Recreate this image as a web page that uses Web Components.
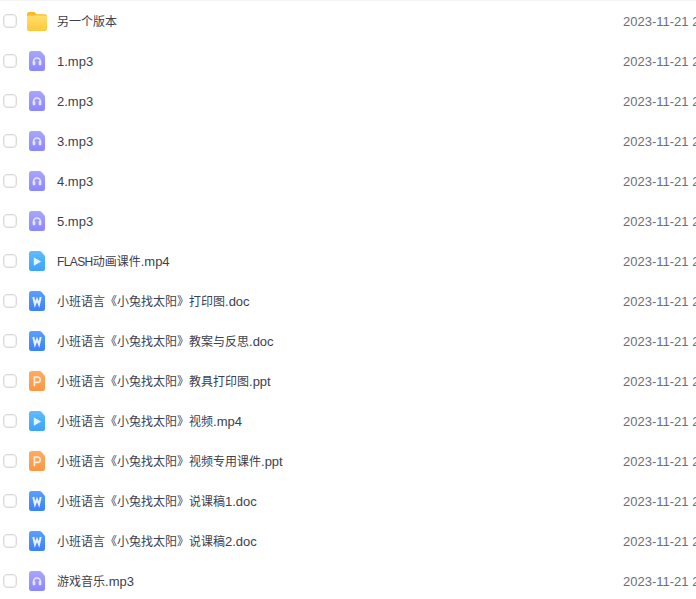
<!DOCTYPE html>
<html>
<head>
<meta charset="utf-8">
<style>
  html, body { margin: 0; height: 100%; overflow: hidden; background: #fff; }
</style>
</head>
<body>
<file-list>
  <file-row type="folder" name="另一个版本"></file-row>
  <file-row type="audio" name="1.mp3"></file-row>
  <file-row type="audio" name="2.mp3"></file-row>
  <file-row type="audio" name="3.mp3"></file-row>
  <file-row type="audio" name="4.mp3"></file-row>
  <file-row type="audio" name="5.mp3"></file-row>
  <file-row type="video" name="FLASH动画课件.mp4"></file-row>
  <file-row type="word" name="小班语言《小兔找太阳》打印图.doc"></file-row>
  <file-row type="word" name="小班语言《小兔找太阳》教案与反思.doc"></file-row>
  <file-row type="ppt" name="小班语言《小兔找太阳》教具打印图.ppt"></file-row>
  <file-row type="video" name="小班语言《小兔找太阳》视频.mp4"></file-row>
  <file-row type="ppt" name="小班语言《小兔找太阳》视频专用课件.ppt"></file-row>
  <file-row type="word" name="小班语言《小兔找太阳》说课稿1.doc"></file-row>
  <file-row type="word" name="小班语言《小兔找太阳》说课稿2.doc"></file-row>
  <file-row type="audio" name="游戏音乐.mp3"></file-row>
</file-list>
<script>
/* global customElements, HTMLElement */
const DOC_SHAPE = 'M2.5 0h8.2c.5 0 1 .2 1.4.6l3.3 3.6c.4.4.6.9.6 1.4v11.9a2.5 2.5 0 0 1-2.5 2.5h-11A2.5 2.5 0 0 1 0 17.5v-15A2.5 2.5 0 0 1 2.5 0z'

const GLYPHS = {
  audio: '<path d="M4.6 12v-1.6a3.4 3.4 0 0 1 6.8 0V12" fill="none" stroke="#e6e6ff" stroke-width="1.6"/><rect x="3.7" y="10" width="2.6" height="4.2" rx="1" fill="#e6e6ff"/><rect x="9.7" y="10" width="2.6" height="4.2" rx="1" fill="#e6e6ff"/>',
  video: '<path d="M4.8 6.6l7.4 4-7.4 4.2z" fill="#e4f4ff"/>',
  word: '<path d="M4.3 6l1.7 7.4 2-5 2 5L11.7 6" fill="none" stroke="#e8f1ff" stroke-width="2"/>',
  ppt: '<path d="M5.4 15.2V6h3.1a2.6 2.6 0 0 1 0 5.4H5.4" fill="none" stroke="#fff1e4" stroke-width="1.6"/>'
}

const FILLS = {
  audio: ['#a9a6ff', '#8a88fc'],
  video: ['#5fbdff', '#3ca3fb'],
  word: ['#5aa0ff', '#3c82f8'],
  ppt: ['#ffac62', '#fb9642']
}

// CJK runs stay at 12px, latin runs are set a little larger like the reference
function nameRuns (name) {
  return name.replace(/[\x21-\x7e]+/g, run => {
    const cls = /^[A-Z]+$/.test(run) ? 'caps' : 'latin'
    return `<span class="${cls}">${run}</span>`
  })
}

class FileIcon extends HTMLElement {
  constructor () {
    super()
    this.attachShadow({ mode: 'open' })
  }

  connectedCallback () {
    const type = this.getAttribute('type')
    let svg
    if (type === 'folder') {
      svg = `<svg width="20" height="19" viewBox="0 0 20 19">
        <defs><linearGradient id="f" x1="0" y1="0" x2="0" y2="1"><stop offset="0" stop-color="#ffdf6b"/><stop offset="1" stop-color="#ffc83a"/></linearGradient></defs>
        <path d="M2 0h5.5l2 2.2H18a2 2 0 0 1 2 2V8H0V2a2 2 0 0 1 2-2z" fill="#fcb928"/>
        <path d="M1.5 3.6h17a1.5 1.5 0 0 1 1.5 1.5V17a2 2 0 0 1-2 2H2a2 2 0 0 1-2-2V5.1a1.5 1.5 0 0 1 1.5-1.5z" fill="url(#f)"/>
      </svg>`
    } else {
      const [top, bottom] = FILLS[type]
      svg = `<svg width="16" height="20" viewBox="0 0 16 20">
        <defs><linearGradient id="g" x1="0" y1="0" x2="0" y2="1"><stop offset="0" stop-color="${top}"/><stop offset="1" stop-color="${bottom}"/></linearGradient></defs>
        <path d="${DOC_SHAPE}" fill="url(#g)"/>
        ${GLYPHS[type]}
      </svg>`
    }
    this.shadowRoot.innerHTML = `
      <style>
        :host { display: flex; align-items: center; justify-content: center; width: 20px; height: 20px; }
        svg { display: block; }
      </style>
      ${svg}`
  }
}

class FileRow extends HTMLElement {
  constructor () {
    super()
    this.attachShadow({ mode: 'open' })
  }

  connectedCallback () {
    this.shadowRoot.innerHTML = `
      <style>
        :host {
          display: flex;
          align-items: center;
          height: 40px;
          padding-left: 3px;
          white-space: nowrap;
          font-size: 13px;
        }
        .check {
          box-sizing: border-box;
          flex: none;
          width: 14px;
          height: 14px;
          border: 1px solid #d9d9d9;
          box-shadow: inset 0 0 0 1px #f1f1f1;
          border-radius: 4px;
          margin-right: 10px;
        }
        file-icon { flex: none; margin-right: 10px; }
        .name { flex: none; width: 566px; color: #3b4150; font-size: 12px; line-height: 20px; padding-top: 2px; }
        .latin { font-size: 13px; }
        .caps { font-size: 12px; letter-spacing: -.6px; }
        .date { flex: none; color: #6a6f7b; }
      </style>
      <div class="check"></div>
      <file-icon type="${this.getAttribute('type')}"></file-icon>
      <div class="name">${nameRuns(this.getAttribute('name'))}</div>
      <div class="date">2023-11-21 21:11</div>`
  }
}

class FileList extends HTMLElement {
  constructor () {
    super()
    this.attachShadow({ mode: 'open' })
    this.shadowRoot.innerHTML = `
      <style>
        :host {
          display: block;
          width: 696px;
          border-top: 1px solid #f3f3f3;
          font-family: "Liberation Sans", "Noto Sans CJK SC", sans-serif;
        }
      </style>
      <slot></slot>`
  }
}

customElements.define('file-icon', FileIcon)
customElements.define('file-row', FileRow)
customElements.define('file-list', FileList)
</script>
</body>
</html>
